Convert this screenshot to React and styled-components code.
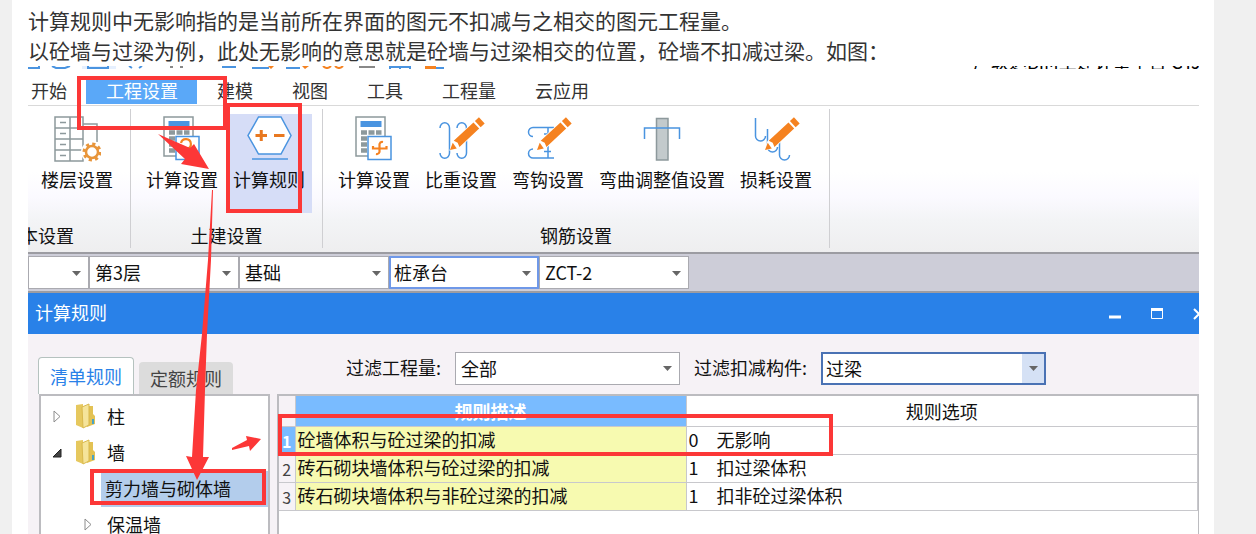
import React from 'react';
import styled, { createGlobalStyle } from 'styled-components';

const blue = '#4a94e0';
const orange = '#f58220';
const red = '#fc3737';

const GlobalStyle = createGlobalStyle`
  *, *::before, *::after {
    box-sizing: border-box;
  }

  body {
    margin: 0;
    background: #f0f0f0;
    color: #111;
    font-family: 'Noto Sans CJK SC', 'Noto Sans', sans-serif;
    font-size: 18px;
    line-height: 24px;
  }

  button, select {
    margin: 0;
    font: inherit;
    color: inherit;
  }
`;

const Page = styled.main`
  display: flex;
  flex-direction: column;
  height: 100vh;
  margin: 0 42px 0 12px;
  padding: 5px 15px 0 16px;
  overflow: hidden;
  background: #fff;
`;

const Intro = styled.p`
  flex: none;
  margin: 0;
  padding-bottom: 1px;
  color: #333;
  font-size: 21px;
  line-height: 30px;
`;

const Shot = styled.section`
  position: relative;
  display: flex;
  flex: 1;
  flex-direction: column;
  min-height: 0;
  overflow: hidden;
`;

const QuickBar = styled.div`
  display: flex;
  flex: none;
  justify-content: space-between;
  height: 3px;
  overflow: hidden;

  svg {
    display: block;
    flex: none;
  }
`;

const AppTitle = styled.span`
  flex: none;
  width: 226px;
  margin-top: -17px;
  overflow: hidden;
  white-space: nowrap;
  color: #000;
`;

const RibbonTabs = styled.nav`
  display: flex;
  flex: none;
  align-items: flex-end;
  height: 37px;
  padding-bottom: 1px;
  border-bottom: 1px solid #d9d9d9;
`;

const RibbonTab = styled.button`
  flex: none;
  height: 25px;
  padding: 0 19px 2px 20px;
  border: 0;
  background: ${p => (p.$active ? '#5aa8f8' : 'transparent')};
  color: ${p => (p.$active ? '#fff' : '#333')};
  line-height: 23px;

  &:first-child {
    margin-left: -17px;
  }
`;

const Ribbon = styled.div`
  display: flex;
  flex: none;
  height: 146px;
  padding: 3px 0 4px;
  background: linear-gradient(#fff 45%, #fbfaff 62%, #f3f4f6 78%, #eeeeef);
`;

const Group = styled.section`
  display: flex;
  flex: none;
  flex-direction: column;
  justify-content: space-between;
  width: ${p => p.$width}px;
  margin-left: ${p => (p.$cut ? -82 : 0)}px;
  padding: 5px 0 1px;
  border-right: 1px solid #cfcfd2;
`;

const GroupTools = styled.div`
  display: flex;
  justify-content: ${p => (p.$end ? 'flex-end' : 'flex-start')};
  gap: 1px;
  padding: 0 ${p => (p.$end ? 10 : 8)}px;
`;

const GroupName = styled.div`
  text-align: center;
`;

const Tool = styled.button`
  display: flex;
  flex: none;
  flex-direction: column;
  align-items: center;
  gap: 5px;
  height: 99px;
  padding: 0 7px;
  border: 0;
  background: ${p => (p.$active ? '#d6ddf7' : 'transparent')};
  white-space: nowrap;
`;

const ComboBar = styled.div`
  display: flex;
  flex: none;
  align-items: center;
  height: 41px;
  border-top: 2px solid #9c9ca2;
  border-bottom: 2px solid #9c9ca2;
  background: #cdcdd8;
`;

const ComboBox = styled.div`
  display: grid;
  flex: none;
  align-items: center;
  width: ${p => p.$width}px;

  select, svg {
    grid-area: 1 / 1;
  }

  select {
    width: 100%;
    height: 33px;
    padding: 0 30px 1px ${p => (p.$focus ? 3 : 5)}px;
    border: ${p => (p.$focus ? 2 : 1)}px solid ${p => p.$focus || '#aaaab0'};
    border-radius: 0;
    appearance: none;
    background: ${p =>
      p.$shaded
        ? 'linear-gradient(to left, #d5e1f5 22px, #fff 22px)'
        : '#fff'};
  }

  svg {
    justify-self: end;
    margin-right: 8px;
    pointer-events: none;
  }
`;

const TitleBar = styled.header`
  display: flex;
  flex: none;
  align-items: center;
  justify-content: space-between;
  height: 41px;
  padding-left: 7px;
  background: #2981e8;
  color: #fff;
`;

const DialogTitle = styled.h1`
  margin: 0;
  padding-bottom: 3px;
  font-size: 18px;
  font-weight: normal;
`;

const WindowButtons = styled.div`
  display: flex;
  gap: 22px;
  margin-right: -10px;
`;

const WindowButton = styled.button`
  display: flex;
  padding: 0;
  border: 0;
  background: none;
`;

const Dialog = styled.div`
  display: flex;
  flex: 1;
  flex-direction: column;
  min-height: 0;
  background: #f6f2f6;
`;

const DialogTop = styled.div`
  display: flex;
  flex: none;
  height: 60px;
  padding-left: 10px;
`;

const RuleTabs = styled.nav`
  display: flex;
  align-items: flex-end;
  gap: 5px;
`;

const RuleTab = styled.button`
  width: ${p => (p.$active ? 96 : 94)}px;
  height: ${p => (p.$active ? 37 : 32)}px;
  padding: 0;
  border: ${p => (p.$active ? '1px solid #b5c2bf' : '0')};
  border-bottom: 0;
  border-radius: 4px 4px 0 0;
  background: ${p => (p.$active ? '#fff' : '#dcdcdc')};
  color: ${p => (p.$active ? '#2981e8' : '#444')};
`;

const Filters = styled.div`
  display: flex;
  align-items: center;
  gap: 14px;
  margin-left: 113px;
  padding-top: 8px;

  label {
    padding-bottom: 2px;
  }
`;

const Columns = styled.div`
  display: flex;
  flex: 1;
  gap: 7px;
  min-height: 0;
  padding-left: 11px;
`;

const Tree = styled.ul`
  flex: none;
  width: 231px;
  margin: 0;
  padding: 3px 0 0;
  overflow: hidden;
  border: 2px solid #bcbcc0;
  border-bottom: 0;
  background: #fff;
  list-style: none;
`;

const TreeItem = styled.li`
  display: flex;
  align-items: center;
  gap: ${p => (p.$child ? 12 : 11)}px;
  height: 36px;
  margin-left: ${p => (p.$selected ? 60 : 0)}px;
  padding-bottom: 2px;
  padding-left: ${p => (p.$selected ? 4 : p.$child ? 41 : 10)}px;
  background: ${p => (p.$selected ? '#b3cdec' : 'transparent')};
  white-space: nowrap;
`;

const Sheet = styled.div`
  flex: 1;
  min-width: 0;
  border: 2px solid #bcbcc0;
  border-right-width: 1px;
  border-bottom: 0;
  background: #fff;
`;

const RuleTable = styled.table`
  width: 100%;
  border-collapse: collapse;
  table-layout: fixed;

  th, td {
    height: 28px;
    padding: 0 2px 2px;
    border: 1px solid #c8c8cc;
    border-top: 0;
    border-left: 0;
    line-height: 24px;
    white-space: nowrap;
    overflow: hidden;
  }

  thead th {
    height: 30px;
    padding-bottom: 0;
    font-weight: normal;
  }
`;

const DescHead = styled.th`
  && {
    background: #79bbff;
    color: #fff;
    font-weight: bold;
  }
`;

const CornerHead = styled.td`
  background: #f6f2f6;
`;

const RowNumber = styled.th`
  && {
    padding: 2px 0 0;
    background: ${p => (p.$active ? '#79bbff' : '#f6f2f6')};
    color: ${p => (p.$active ? '#fff' : '#444')};
    font-size: 16px;
    font-weight: ${p => (p.$active ? 'bold' : 'normal')};
  }
`;

const RuleDesc = styled.td`
  background: #f7fab0;
`;

const RuleCode = styled.span`
  display: inline-block;
  width: 28px;
`;

const Marks = styled.svg`
  position: absolute;
  top: 0;
  left: 0;
  width: 100%;
  height: 100%;
  pointer-events: none;
`;

const Caret = () => (
  <svg width="9" height="6" viewBox="0 0 9 6" aria-hidden="true">
    <path d="M0 1h9L4.500 6z" fill="#666" />
  </svg>
);

const Combo = ({ label, value, id, ...rest }) => (
  <ComboBox {...rest}>
    <select id={id} aria-label={label} defaultValue={value}>
      <option>{value}</option>
    </select>
    <Caret />
  </ComboBox>
);

const ToolIcon = ({ children }) => (
  <svg
    width="48"
    height="48"
    viewBox="0 0 48 48"
    fill="none"
    stroke={blue}
    strokeWidth="1.5"
    aria-hidden="true"
  >
    {children}
  </svg>
);

const Pencil = () => (
  <g transform="translate(13 36) rotate(-43)" stroke="none">
    <path d="M-1 0L8-5H45V5H8z" fill="#fff" />
    <path d="M0 0L7-3.500L6 3.500z" fill={orange} />
    <path d="M9-4.200H36V4.200H9L10.500 0z" fill={orange} />
    <path d="M38-4.200H43.500V4.200H38z" fill={orange} />
  </g>
);

const FloorIcon = () => (
  <ToolIcon>
    <g stroke="#8d999c">
      <path d="M2 3H30V47H2zM17 3V47M2 14H30M2 25H30M2 36H30" />
      <path d="M7 8.500h6M7 19.500h6M7 30.500h6M7 41.500h6M30 10H44V28" />
    </g>
    <circle cx="39" cy="38" r="11" fill="#fff" stroke="none" />
    <circle
      cx="39"
      cy="38"
      r="8"
      stroke="#e8953a"
      strokeWidth="3"
      strokeDasharray="3.140 3.140"
    />
    <circle cx="39" cy="38" r="6" stroke="#e8953a" strokeWidth="2.500" />
  </ToolIcon>
);

const CalcIcon = ({ children }) => (
  <ToolIcon>
    <path d="M6 3H35V42H6z" fill="#fff" stroke="#8d999c" />
    <path d="M10.500 7H31.500V13H10.500z" fill={blue} stroke="none" />
    <path
      d="M11 18.500H31.500M11 24.500H31.500M11 30.500H31.500M11 36.500H31.500"
      stroke="#8d999c"
      strokeWidth="4.500"
      strokeDasharray="6 1.500"
    />
    <path d="M18 22.500H41V45.500H18z" fill="#fff" />
    <g stroke={orange} strokeWidth="2.200">
      {children}
    </g>
  </ToolIcon>
);

const HexIcon = () => (
  <ToolIcon>
    <path d="M13.500 3H36L46 21.500L36 40H13.500L3 21.500z" fill="#fff" />
    <path d="M7 45H43" />
    <path
      d="M10.500 21.500H22M16.250 16V27M29 21.500H39.500"
      stroke="#e87820"
      strokeWidth="3"
    />
  </ToolIcon>
);

const WeightIcon = () => (
  <ToolIcon>
    <path d="M3 14a4.600 5 0 0 1 9.500 0V39a4.600 5 0 0 1-9.500 0" />
    <path d="M20 14a4.600 5 0 0 1 9.500 0V39a4.600 5 0 0 1-9.500 0" />
    <Pencil />
  </ToolIcon>
);

const HookIcon = () => (
  <ToolIcon>
    <path d="M30 13.500H9a4.500 4.500 0 0 0 0 9M30 44H9a4.500 4.500 0 0 1 0-9" />
    <path d="M24 13.500V44M20 20h7M20 37.500h7" />
    <Pencil />
  </ToolIcon>
);

const BendIcon = () => (
  <ToolIcon>
    <path d="M18.500 4.500H30V46H18.500z" fill="#c3cacc" stroke="#8d999c" />
    <path d="M6.500 25V14H41.500V25" />
  </ToolIcon>
);

const LossIcon = () => (
  <ToolIcon>
    <path d="M3.500 4V22a5 5 0 0 0 10 0M15.500 15V33a5 5 0 0 0 10 0M27.500 26V41a5 5 0 0 0 10 0" />
    <Pencil />
  </ToolIcon>
);

const CalcRebarIcon = () => (
  <CalcIcon>
    <path d="M23 32v2.500H36.500V32M33 28a3 3 0 0 0-3.500 2V38a3 3 0 0 1-3.500 2" />
  </CalcIcon>
);

const CalcCivilIcon = () => (
  <CalcIcon>
    <path d="M23 29a5 5 0 1 1 6 6" />
  </CalcIcon>
);

const Folder = () => (
  <svg width="21" height="26" viewBox="0 0 21 26" aria-hidden="true">
    <path d="M1 2L8 1V25L1 22z" fill="#e6c85e" />
    <path d="M13 3H18V11L20 13V21L12 24z" fill="#e3c254" />
    <path d="M7 4L14 1V22L8 25z" fill="#f5e49a" stroke="#d9b94c" />
    <path d="M18 16V21" stroke="#4aa3c4" strokeWidth="2" />
  </svg>
);

const Twisty = ({ open }) => (
  <svg width="13" height="13" viewBox="0 0 13 13" aria-hidden="true">
    {open ? (
      <path d="M10 3V11H2z" fill="#444" stroke="#222" />
    ) : (
      <path d="M3 1L9 6.500L3 12z" fill="#fff" stroke="#8c8c8c" />
    )}
  </svg>
);

const QuickIcons = () => (
  <svg width="430" height="3" viewBox="0 0 430 3" fill="none" aria-hidden="true">
    <path d="M54 0H88V3H54z" fill="#e6f0fe" />
    <path
      d="M0 2H11V0M24 0L28 2H37L42 0M60 0V2H80V0M101 0l3 2M111 2l3-2M194 1H208M224 2H241M258 2H272M362 0V3M372 0V3M382 0V3M362 1H382M408 2H416"
      stroke={blue}
      strokeWidth="2"
    />
    <path d="M142 1h3M152 1h3M331 1H347" stroke="#888" strokeWidth="2" />
    <path d="M295 0q4 4 8 0M307 0q4 4 8 0" stroke={orange} strokeWidth="2" />
    <path d="M240 0H246L243 3zM274 0H281L277 3zM397 0H408V3H397z" fill={orange} />
  </svg>
);

// red boxes and arrows that walk the reader through the steps
const Annotations = () => (
  <Marks aria-hidden="true">
    <g fill="none" stroke={red} strokeWidth="4">
      <rect x="51" y="12" width="146" height="50" />
      <rect x="200" y="39" width="72" height="106" />
      <rect x="64" y="405" width="172" height="32" />
      <rect x="252" y="350" width="551" height="38" />
    </g>
    <g fill={red}>
      <path d="M130 68L162 82L166 78L181 103L153 98L157 93z" />
      <path d="M185 124L183 194L179 268L177 324L175 391L181 391L169 414L158 390L164 391L168 324L174 268L180 194L184 124z" />
      <path d="M204 382L219 374L218 370L233 373L222 385L221 380L204 384z" />
    </g>
  </Marks>
);

const ribbonTabs = ['开始', '工程设置', '建模', '视图', '工具', '工程量', '云应用'];

const groups = [
  {
    name: '基本设置',
    width: 185,
    cut: true,
    tools: [{ name: '楼层设置', Icon: FloorIcon }],
  },
  {
    name: '土建设置',
    width: 192,
    tools: [
      { name: '计算设置', Icon: CalcCivilIcon },
      { name: '计算规则', Icon: HexIcon, active: true },
    ],
  },
  {
    name: '钢筋设置',
    width: 507,
    tools: [
      { name: '计算设置', Icon: CalcRebarIcon },
      { name: '比重设置', Icon: WeightIcon },
      { name: '弯钩设置', Icon: HookIcon },
      { name: '弯曲调整值设置', Icon: BendIcon },
      { name: '损耗设置', Icon: LossIcon },
    ],
  },
];

const rules = [
  ['砼墙体积与砼过梁的扣减', '0', '无影响'],
  ['砖石砌块墙体积与砼过梁的扣减', '1', '扣过梁体积'],
  ['砖石砌块墙体积与非砼过梁的扣减', '1', '扣非砼过梁体积'],
];

const App = () => (
  <>
    <GlobalStyle />
    <Page>
      <Intro>
        计算规则中无影响指的是当前所在界面的图元不扣减与之相交的图元工程量。
        <br />
        以砼墙与过梁为例，此处无影响的意思就是砼墙与过梁相交的位置，砼墙不扣减过梁。如图：
      </Intro>
      <Shot>
        <QuickBar>
          <QuickIcons />
          <AppTitle>广联达BIM土建计量平台 GTJ</AppTitle>
        </QuickBar>
        <RibbonTabs>
          {ribbonTabs.map(name => (
            <RibbonTab key={name} type="button" $active={name === '工程设置'}>
              {name}
            </RibbonTab>
          ))}
        </RibbonTabs>
        <Ribbon>
          {groups.map(({ name, width, cut, tools }) => (
            <Group key={name} $width={width} $cut={cut}>
              <GroupTools $end={cut}>
                {tools.map(({ name: toolName, Icon, active }) => (
                  <Tool key={toolName} type="button" $active={active}>
                    <Icon />
                    {toolName}
                  </Tool>
                ))}
              </GroupTools>
              <GroupName>{name}</GroupName>
            </Group>
          ))}
        </Ribbon>
        <ComboBar>
          <Combo label="工程" value="" $width={61} />
          <Combo label="楼层" value="第3层" $width={150} />
          <Combo label="类别" value="基础" $width={150} />
          <Combo label="构件类型" value="桩承台" $width={150} $focus="#6f98e8" />
          <Combo label="构件" value="ZCT-2" $width={150} />
        </ComboBar>
        <TitleBar>
          <DialogTitle>计算规则</DialogTitle>
          <WindowButtons>
            <WindowButton type="button" aria-label="最小化">
              <svg width="20" height="20" viewBox="0 0 20 20">
                <path d="M4 13H16" stroke="#fff" strokeWidth="3" />
              </svg>
            </WindowButton>
            <WindowButton type="button" aria-label="最大化">
              <svg width="20" height="20" viewBox="0 0 20 20" fill="none">
                <path d="M4.500 5V14.500H15.500V5" stroke="#fff" />
                <path d="M4 5.500H16" stroke="#fff" strokeWidth="3" />
              </svg>
            </WindowButton>
            <WindowButton type="button" aria-label="关闭">
              <svg width="20" height="20" viewBox="0 0 20 20">
                <path d="M5 5L15 15M15 5L5 15" stroke="#fff" strokeWidth="2" />
              </svg>
            </WindowButton>
          </WindowButtons>
        </TitleBar>
        <Dialog>
          <DialogTop>
            <RuleTabs>
              <RuleTab type="button" $active>
                清单规则
              </RuleTab>
              <RuleTab type="button">定额规则</RuleTab>
            </RuleTabs>
            <Filters>
              <label htmlFor="quantity">过滤工程量:</label>
              <Combo id="quantity" value="全部" $width={225} />
              <label htmlFor="member">过滤扣减构件:</label>
              <Combo
                id="member"
                value="过梁"
                $width={225}
                $focus="#4a72b4"
                $shaded
              />
            </Filters>
          </DialogTop>
          <Columns>
            <Tree>
              <TreeItem>
                <Twisty />
                <Folder />柱
              </TreeItem>
              <TreeItem>
                <Twisty open />
                <Folder />墙
              </TreeItem>
              <TreeItem $selected>剪力墙与砌体墙</TreeItem>
              <TreeItem $child>
                <Twisty />
                保温墙
              </TreeItem>
            </Tree>
            <Sheet>
              <RuleTable>
                <colgroup>
                  <col width="16" />
                  <col width="391" />
                  <col />
                </colgroup>
                <thead>
                  <tr>
                    <CornerHead />
                    <DescHead scope="col">规则描述</DescHead>
                    <th scope="col">规则选项</th>
                  </tr>
                </thead>
                <tbody>
                  {rules.map(([desc, code, option], i) => (
                    <tr key={desc}>
                      <RowNumber scope="row" $active={i === 0}>
                        {i + 1}
                      </RowNumber>
                      <RuleDesc>{desc}</RuleDesc>
                      <td>
                        <RuleCode>{code}</RuleCode>
                        {option}
                      </td>
                    </tr>
                  ))}
                </tbody>
              </RuleTable>
            </Sheet>
          </Columns>
        </Dialog>
        <Annotations />
      </Shot>
    </Page>
  </>
);

export default App;
